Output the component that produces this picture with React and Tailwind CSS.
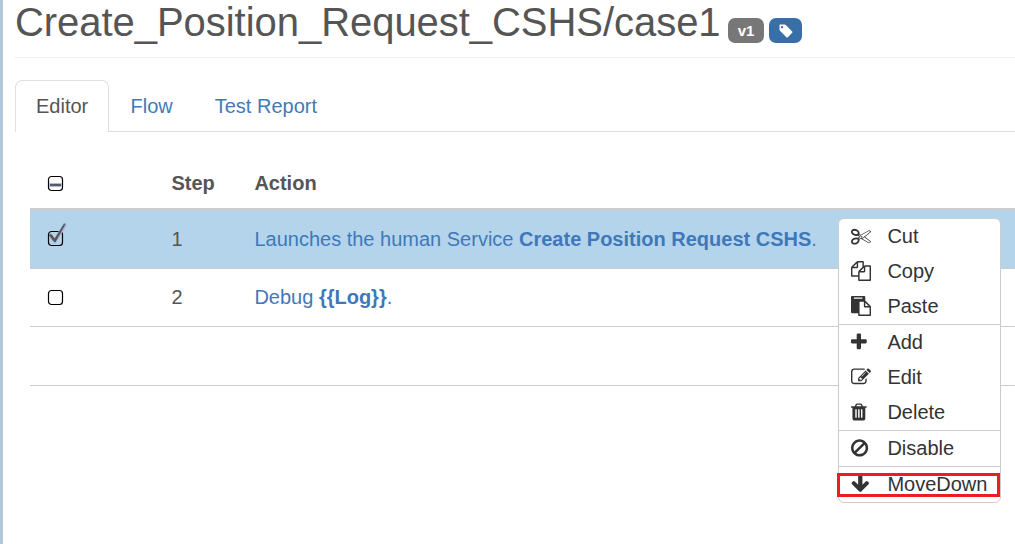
import React from "react";

const ICONS = {
  cut: "M960 896q26 0 45 19t19 45-19 45-45 19-45-19-19-45 19-45 45-19zm300 64l507 398q28 20 25 56-5 35-35 51l-128 64q-13 7-29 7-17 0-31-8l-690-387-110 66q-8 4-12 5 14 49 10 97-7 77-56 147.5t-132 123.5q-132 84-277 84-136 0-222-78-90-84-79-207 7-76 56-147t131-124q132-84 278-84 83 0 151 31 9-13 22-22l122-73-122-73q-13-9-22-22-68 31-151 31-146 0-278-84-82-53-131-124t-56-147q-5-59 15.5-113t63.5-93q85-79 222-79 145 0 277 84 83 52 132 123t56 148q4 48-10 97 4 1 12 5l110 66 690-387q14-8 31-8 16 0 29 7l128 64q30 16 35 51 3 36-25 56zm-681-260q46-42 21-108t-106-117q-92-59-192-59-74 0-113 36-46 42-21 108t106 117q92 59 192 59 74 0 113-36zm-85 745q81-51 106-117t-21-108q-39-36-113-36-100 0-192 59-81 51-106 117t21 108q39 36 113 36 100 0 192-59zm178-613l96 58v-11q0-36 33-56l14-8-79-44-26 26q-3 3-10 11t-12 12q-2 2-4 3.5t-3 2.5zm224 224l96 32 736-576-128-64-768 431v113l-160 96 9 8q2 2 7 6 4 4 11 12t11 12l26 26zm704 416l128-64-520-408-177 138q-2 3-13 7z",
  copy: "M1696 384q40 0 68 28t28 68v1216q0 40-28 68t-68 28h-960q-40 0-68-28t-28-68v-288h-544q-40 0-68-28t-28-68v-672q0-40 20-88t48-76l408-408q28-28 76-48t88-20h416q40 0 68 28t28 68v328q68-40 128-40h416zm-544 213l-299 299h299v-299zm-640-384l-299 299h299v-299zm196 647l316-316v-416h-384v416q0 40-28 68t-68 28h-416v640h512v-256q0-40 20-88t48-76zm956 804v-1152h-384v416q0 40-28 68t-68 28h-416v640h896z",
  paste: "M768 1664h896v-640h-416q-40 0-68-28t-28-68v-416h-384v1152zm256-1440v-64q0-13-9.5-22.5t-22.5-9.5h-704q-13 0-22.5 9.5t-9.5 22.5v64q0 13 9.5 22.5t22.5 9.5h704q13 0 22.5-9.5t9.5-22.5zm256 672h299l-299-299v299zm512 128v672q0 40-28 68t-68 28h-960q-40 0-68-28t-28-68v-160h-544q-40 0-68-28t-28-68v-1344q0-40 28-68t68-28h1088q40 0 68 28t28 68v328q21 13 36 28l408 408q28 28 48 76t20 88z",
  add: "M1600 736v192q0 40-28 68t-68 28h-416v416q0 40-28 68t-68 28h-192q-40 0-68-28t-28-68v-416h-416q-40 0-68-28t-28-68v-192q0-40 28-68t68-28h416v-416q0-40 28-68t68-28h192q40 0 68 28t28 68v416h416q40 0 68 28t28 68z",
  edit: "M888 1184l116-116-152-152-116 116v56h96v96h56zm440-720q-16-16-33 1l-350 350q-17 17-1 33t33-1l350-350q17-17 1-33zm80 594v190q0 119-84.5 203.5t-203.5 84.5h-832q-119 0-203.5-84.5t-84.5-203.5v-832q0-119 84.5-203.5t203.5-84.5h832q63 0 117 25 15 7 18 23 3 17-9 29l-49 49q-14 14-32 8-23-6-45-6h-832q-66 0-113 47t-47 113v832q0 66 47 113t113 47h832q66 0 113-47t47-113v-126q0-13 9-22l64-64q15-15 35-7t20 29zm-96-738l288 288-672 672h-288v-288zm444 132l-92 92-288-288 92-92q28-28 68-28t68 28l152 152q28 28 28 68t-28 68z",
  trash: "M704 1376v-704q0-14-9-23t-23-9h-64q-14 0-23 9t-9 23v704q0 14 9 23t23 9h64q14 0 23-9t9-23zm256 0v-704q0-14-9-23t-23-9h-64q-14 0-23 9t-9 23v704q0 14 9 23t23 9h64q14 0 23-9t9-23zm256 0v-704q0-14-9-23t-23-9h-64q-14 0-23 9t-9 23v704q0 14 9 23t23 9h64q14 0 23-9t9-23zm-544-992h448l-48-117q-7-9-17-11h-317q-10 2-17 11zm928 32v64q0 14-9 23t-23 9h-96v948q0 83-47 143.5t-113 60.5h-832q-66 0-113-58.5t-47-141.5v-952h-96q-14 0-23-9t-9-23v-64q0-14 9-23t23-9h309l70-167q15-37 54-63t79-26h320q40 0 79 26t54 63l70 167h309q14 0 23 9t9 23z",
  ban: "M1440 893q0-161-87-295l-754 753q137 89 297 89 111 0 211.5-43.5t173.5-116.5 116-174.5 43-212.5zm-999 299l755-754q-135-91-300-91-148 0-273 73t-198 199-73 274q0 162 89 299zm1223-299q0 157-61 300t-163.5 246-245 164-298.5 61-298.5-61-245-164-163.5-246-61-300 61-299.5 163.5-245.5 245-164 298.5-61 298.5 61 245 164 163.5 245.5 61 299.5z",
  down: "M1675 832q0 53-37 90l-651 652q-39 37-91 37-53 0-90-37l-651-652q-38-36-38-90 0-53 38-91l74-75q39-37 91-37 53 0 90 37l294 294v-704q0-52 38-90t90-38h128q52 0 90 38t38 90v704l294-294q37-37 90-37 52 0 91 37l75 75q37 39 37 91z",
};

// box: viewBox chosen so that narrower glyphs stay aligned to the left edge
const MENU = [
  [
    { label: "Cut", icon: "cut", box: "0 0 1792 1792" },
    { label: "Copy", icon: "copy", box: "0 0 1792 1792" },
    { label: "Paste", icon: "paste", box: "0 0 1792 1792" },
  ],
  [
    { label: "Add", icon: "add", box: "192 0 1792 1792" },
    { label: "Edit", icon: "edit", box: "0 0 1792 1792" },
    { label: "Delete", icon: "trash", box: "192 0 1792 1792" },
  ],
  [{ label: "Disable", icon: "ban", box: "128 0 1792 1792" }],
  [{ label: "MoveDown", icon: "down", box: "64 0 1792 1792" }],
];

function Checkbox({ state }) {
  return (
    <svg className="block h-[30px] w-[22px] overflow-visible" viewBox="0 0 22 30">
      <rect x="0.5" y="8.5" width="14" height="14" rx="3" fill={state === "checked" ? "none" : "#fff"} stroke="#000" strokeWidth="1.2" />
      {state === "mixed" && (
        <>
          <rect x="1" y="15" width="13" height="4" fill="#a9bfe6" />
          <rect x="2" y="16" width="11" height="2" fill="#5a5a5a" />
        </>
      )}
      {state === "checked" && (
        <>
          <path d="M2 12.5L6.8 18L17.3 1" fill="none" stroke="#a3b0dc" strokeWidth="3.6" />
          <path d="M0.8 12L3 10.8L6.8 15.4L16 0.8L17.8 0.4L7.6 19L6 18.8Z" fill="#555" />
        </>
      )}
    </svg>
  );
}

function Row({ state, step, className, boxClass = "", children }) {
  return (
    <div className={`flex items-center border-[#ccc] pl-[18px] ${className}`}>
      <div className={`w-[123.4px] ${boxClass}`}>{state && <Checkbox state={state} />}</div>
      <div className="w-[83px]">{step}</div>
      <div className="whitespace-pre">{children}</div>
    </div>
  );
}

export default function App() {
  return (
    <div className="relative h-[544px] w-full overflow-hidden border-l-[3px] border-[#b4c6da] bg-white pl-3 font-['Liberation_Sans',Arial,sans-serif] text-xl leading-7 text-[#555]">
      <header className="flex h-[58px] items-start border-b border-[#eee]">
        <h1 className="w-[707px] text-[40px] leading-[44px] tracking-[-0.045px] whitespace-nowrap">Create_Position_Request_CSHS/case1</h1>
        <span className="mt-[18px] ml-[6px] flex h-[25px] w-9 items-center justify-center rounded-[7px] bg-[#777] text-[15px] leading-none font-bold text-white">v1</span>
        <span className="mt-[18px] ml-[5px] flex h-[25px] w-[33px] items-center justify-center rounded-[7px] bg-[#396fa8]">
          <svg className="h-[14px] w-[14px]" viewBox="0 0 14 14">
            <path fillRule="evenodd" fill="#fff" d="M1 .5H5.6Q6.3.5 6.8 1L13.2 7.4Q13.9 8.1 13.2 8.8L8.8 13.2Q8.1 13.9 7.4 13.2L1 6.8Q.5 6.3.5 5.6V1Q.5.5 1 .5ZM3.1 1.9A1.2 1.2 0 1 0 3.1 4.3A1.2 1.2 0 1 0 3.1 1.9Z" />
          </svg>
        </span>
      </header>

      <nav className="mt-[22px] flex h-[52px] border-b border-[#ddd] text-[#4479b8]">
        <a className="h-[52px] w-[94px] rounded-t-[7px] border border-b-0 border-[#dcdfe4] bg-white pt-[11px] pl-5 text-[#555]">Editor</a>
        <a className="pt-3 pl-[21.5px]">Flow</a>
        <a className="pt-3 pl-[42px]">Test Report</a>
      </nav>

      <main className="ml-[15px] pt-[26px]">
        <Row state="mixed" step="Step" className="h-[52px] border-b-2 font-bold">Action</Row>
        <Row state="checked" step="1" className="h-[59px] border-b bg-[#b4d4eb]" boxClass="pb-[2px]">
          <span className="text-[#3f78ba]">Launches the human Service <b>Create Position Request CSHS</b>.</span>
        </Row>
        <Row state="empty" step="2" className="h-[58px] border-b pb-[2px]">
          <span className="text-[#3f78ba]">Debug <b>{"{{Log}}"}</b>.</span>
        </Row>
        <Row className="h-[59px] border-b" />
      </main>

      <div className="absolute top-[218px] left-[835px] w-[163px] rounded-[6px] border border-[#ccc] bg-white text-[#333]">
        {MENU.map((group, i) => (
          <ul key={i} className="border-[#ccc] not-first:border-t">
            {group.map((item) => (
              <li key={item.label} className="flex h-[35px] items-center gap-[16.4px] pb-[2px] pl-3">
                <svg className="h-5 w-5 fill-[#333]" viewBox={item.box}>
                  <path d={ICONS[item.icon]} />
                </svg>
                <span>{item.label}</span>
              </li>
            ))}
          </ul>
        ))}
      </div>
      <div className="absolute top-[473px] left-[834px] h-6 w-[163px] border-3 border-[#ed1c24]" />
    </div>
  );
}
